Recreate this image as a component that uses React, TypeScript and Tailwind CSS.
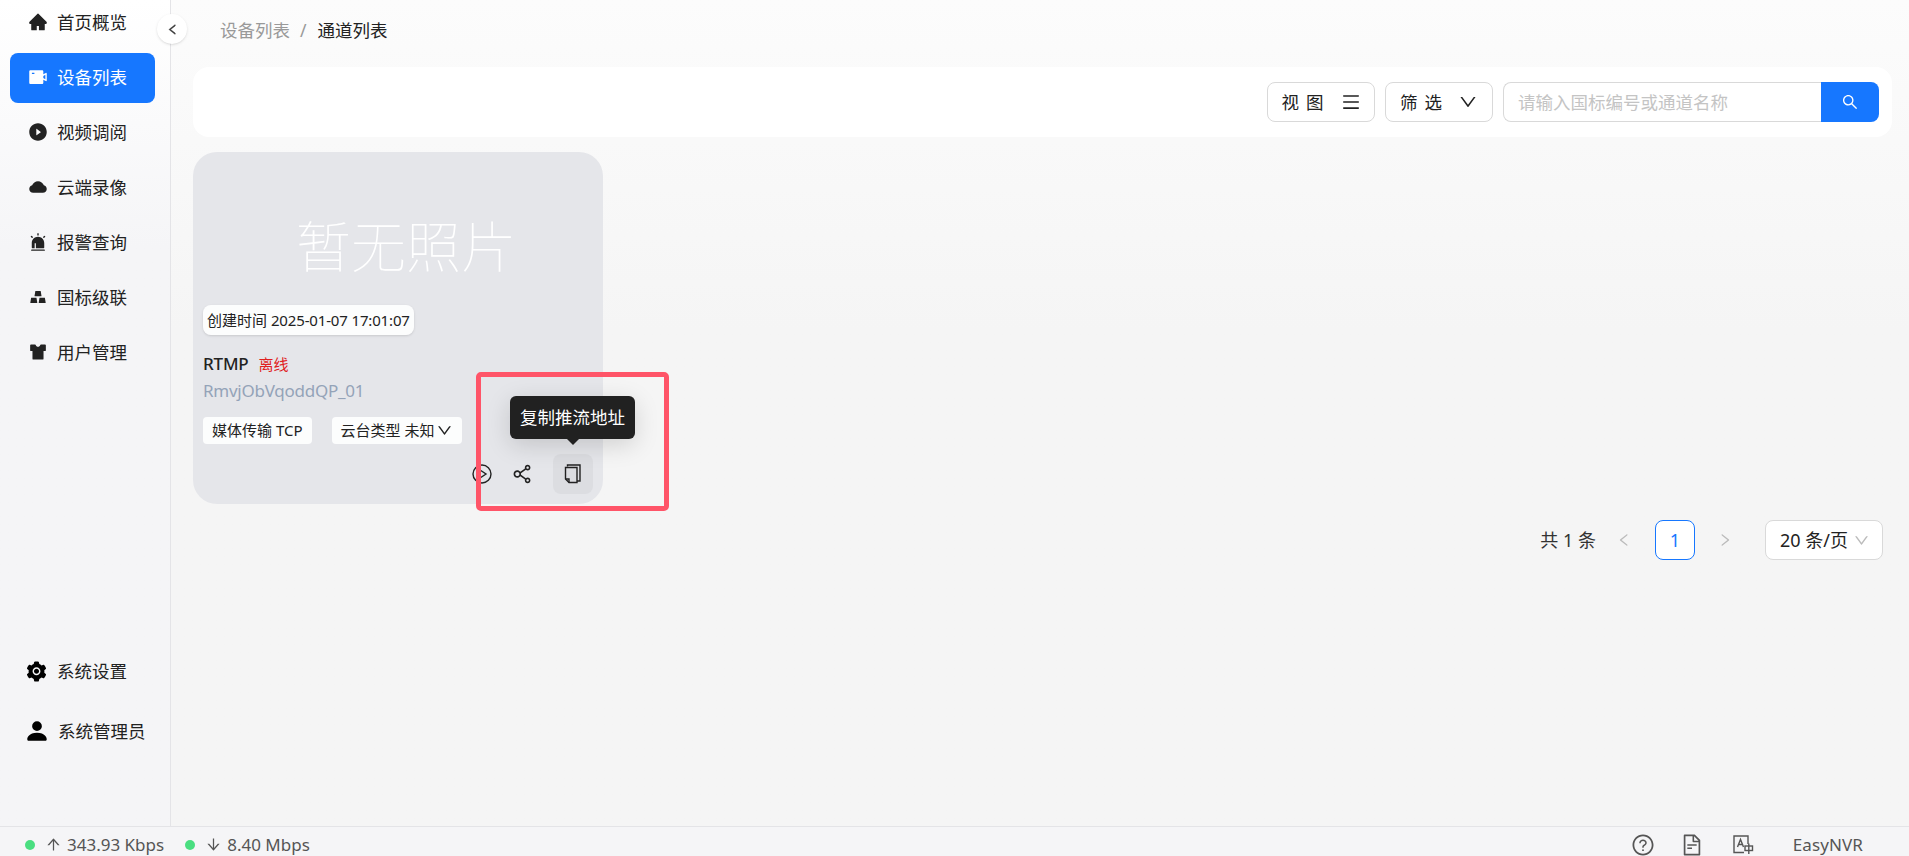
import type { ReactNode } from 'react';
import {
  AiFillAlert,
  AiFillCloud,
  AiFillGold,
  AiFillHome,
  AiFillPlayCircle,
  AiFillSetting,
  AiFillSkin,
  AiFillVideoCamera,
  AiOutlineDown,
  AiOutlineFileText,
  AiOutlineLeft,
  AiOutlineMenu,
  AiOutlineQuestionCircle,
  AiOutlineRight,
  AiOutlineSearch,
  AiOutlineShareAlt,
  AiOutlineArrowUp,
  AiOutlineArrowDown,
} from 'react-icons/ai';
import { BsPersonFill } from 'react-icons/bs';

const FONT = "font-['Noto_Sans','Noto_Sans_CJK_SC',sans-serif]";

const menu: { label: string; icon: ReactNode; active?: boolean }[] = [
  { label: '首页概览', icon: <AiFillHome size={22} /> },
  { label: '设备列表', icon: <AiFillVideoCamera size={22} />, active: true },
  { label: '视频调阅', icon: <AiFillPlayCircle size={22} /> },
  { label: '云端录像', icon: <AiFillCloud size={22} /> },
  { label: '报警查询', icon: <AiFillAlert size={20} /> },
  { label: '国标级联', icon: <AiFillGold size={20} /> },
  { label: '用户管理', icon: <AiFillSkin size={22} /> },
];

function Sidebar() {
  return (
    <aside className="w-[171px] shrink-0 border-r border-[#e4e4e7] flex flex-col justify-between bg-gradient-to-b from-white to-[#f5f5f7] to-[30%]">
      <nav className="flex flex-col gap-[5px] pl-[10px] pr-[15px] -mt-[2px]">
        {menu.map(m => (
          <div
            key={m.label}
            className={`h-[50px] rounded-lg flex items-center text-[17.5px] pl-[18px] pb-[2px] gap-[9px] ${
              m.active ? 'bg-[#1677ff] text-white' : 'text-[#222]'
            }`}
          >
            <span className="w-[20px] flex justify-center">{m.icon}</span>
            <span>{m.label}</span>
          </div>
        ))}
      </nav>
      <div className="flex flex-col gap-[34px] pl-[25px] pb-[82px] text-[17.5px] text-[#222]">
        <div className="flex items-center gap-[9px] h-[26px]">
          <AiFillSetting size={23} className="text-black" />
          <span>系统设置</span>
        </div>
        <div className="flex items-center gap-[8px] h-[26px]">
          <BsPersonFill size={26} className="text-black -ml-[1px]" />
          <span>系统管理员</span>
        </div>
      </div>
    </aside>
  );
}

function CopyIcon() {
  return (
    <svg width="18" height="20" viewBox="0 0 18 20" fill="none" stroke="#222" strokeWidth="1.4">
      <path d="M3.5 2.5 V1 H16 V17 H13" />
      <path d="M1.5 3.5 H13 V18.5 H5 L1.5 15 Z" />
      <path d="M1.5 15 H5 V18.5" />
    </svg>
  );
}

function PlayIcon() {
  return (
    <svg width="20" height="20" viewBox="0 0 20 20" fill="none" stroke="#222" strokeWidth="1.4">
      <circle cx="10" cy="10" r="9" />
      <path d="M8 6 L14 10 L8 14 Z" />
    </svg>
  );
}

function TranslateIcon() {
  return (
    <svg width="21" height="20" viewBox="0 0 21 20" fill="none" stroke="#555" strokeWidth="1.4">
      <path d="M11 17.5 H1 V1 H15 V9" />
      <path d="M4.5 12 L7.5 4.5 L10.5 12 M5.5 9.5 H9.5" />
      <rect x="12" y="11" width="7.5" height="4.5" />
      <path d="M15.8 8.5 V19" />
    </svg>
  );
}

function Toolbar() {
  return (
    <div className="h-[70px] bg-white rounded-2xl mr-[17px] flex items-center justify-end gap-[10px] pr-[13px]">
      <button className="w-[108px] h-[40px] border border-[#d9d9d9] rounded-lg flex items-center justify-center gap-[10px] text-[17.5px] text-[#222]">
        <span className="tracking-[7px]">视图</span>
        <AiOutlineMenu size={20} />
      </button>
      <button className="w-[108px] h-[40px] border border-[#d9d9d9] rounded-lg flex items-center justify-center gap-[9px] text-[17.5px] text-[#222]">
        <span className="tracking-[7px]">筛选</span>
        <AiOutlineDown size={20} />
      </button>
      <div className="w-[376px] h-[40px] flex">
        <input
          placeholder="请输入国标编号或通道名称"
          className="flex-1 min-w-0 h-full border border-r-0 border-[#d9d9d9] rounded-l-lg px-[14px] text-[17.5px] outline-none placeholder:text-[#c4c4c4]"
        />
        <button className="w-[58px] h-full bg-[#1677ff] rounded-r-lg flex items-center justify-center text-white">
          <AiOutlineSearch size={18} />
        </button>
      </div>
    </div>
  );
}

function ChannelCard() {
  return (
    <div className="w-[410px] h-[352px] rounded-3xl bg-[#e5e6ea] px-[10px] relative flex flex-col">
      <div className="h-[153px] pt-[63px] pl-[93px]">
        <span className="text-[55px] leading-[62px] font-thin text-white">暂无照片</span>
      </div>
      <div className="self-start h-[30px] px-[4px] flex items-center bg-white/90 rounded-lg shadow-sm text-[15px] text-[#222]">
        创建时间&nbsp;<span className="tracking-[-0.15px]">2025-01-07 17:01:07</span>
      </div>
      <div className="mt-[17px] flex items-center gap-[10px] h-[24px]">
        <span className="text-[17px] font-medium text-[#222] tracking-[-0.2px]">RTMP</span>
        <span className="text-[15px] text-[#e02020]">离线</span>
      </div>
      <div className="mt-[2px] text-[17px] leading-[26px] text-[#94a3b8] tracking-[-0.25px]">RmvjObVqoddQP_01</div>
      <div className="mt-[13px] flex gap-[20px] text-[15px] text-[#222]">
        <span className="h-[27px] px-[9px] flex items-center bg-white/90 rounded">媒体传输 TCP</span>
        <span className="h-[27px] px-[9px] flex items-center gap-[2px] bg-white/90 rounded">
          云台类型 未知
          <AiOutlineDown size={17} />
        </span>
      </div>
      <div className="mt-[10px] flex items-center justify-end gap-[18px]">
        <PlayIcon />
        <AiOutlineShareAlt size={24} className="text-[#222]" />
        <span className="w-[40px] h-[40px] ml-[1px] bg-[#dcdde1] rounded-lg flex items-center justify-center">
          <CopyIcon />
        </span>
      </div>

      {/* tooltip */}
      <div className="absolute left-[317px] top-[244px] h-[43px] w-[125px] bg-[#212121] rounded-md text-white text-[17.5px] flex items-center justify-center shadow-[0_6px_24px_rgba(0,0,0,0.15)]">
        复制推流地址
        <span className="absolute left-1/2 -bottom-[6px] -ml-[6px] w-0 h-0 border-x-[6px] border-x-transparent border-t-[6px] border-t-[#212121]" />
      </div>
      {/* red annotation box */}
      <div className="absolute left-[283px] top-[220px] w-[193px] h-[139px] border-[5px] border-[#ff5468] rounded-[5px]" />
    </div>
  );
}

function Pagination() {
  return (
    <div className="flex items-center justify-end mr-[26px] mt-[16px] h-[40px] text-[18px] text-[#333]">
      <span>共 1 条</span>
      <AiOutlineLeft size={16} className="ml-[20px] text-[#bbb]" />
      <span className="ml-[23px] w-[40px] h-[40px] border border-[#1677ff] rounded-lg flex items-center justify-center text-[#1677ff] bg-white">1</span>
      <AiOutlineRight size={16} className="ml-[22px] text-[#bbb]" />
      <span className="ml-[32px] w-[118px] h-[40px] border border-[#d9d9d9] rounded-lg bg-white flex items-center justify-between pl-[14px] pr-[12px] text-[#222]">
        20 条/页
        <AiOutlineDown size={17} className="text-[#bbb]" />
      </span>
    </div>
  );
}

export default function App() {
  return (
    <div className={`h-[856px] overflow-hidden flex flex-col bg-[#f5f5f7] ${FONT}`}>
      <div className="flex flex-1 min-h-0 relative">
        <Sidebar />
        <button className="absolute left-[157px] top-[14px] w-[30px] h-[30px] rounded-full bg-white shadow-sm flex items-center justify-center text-[#333]">
          <AiOutlineLeft size={13} strokeWidth={40} />
        </button>
        <main className="flex-1 min-w-0 pl-[22px] bg-gradient-to-b from-[#fcfcfc] to-[#f5f5f5] to-[40%]">
          <div className="h-[67px] pl-[27px] pt-[18px] text-[17.5px] leading-[24px]">
            <span className="text-[#999]">设备列表</span>
            <span className="text-[#999] mx-[10px]">/</span>
            <span className="text-[#222] ml-[1px]">通道列表</span>
          </div>
          <Toolbar />
          <div className="mt-[15px]">
            <ChannelCard />
          </div>
          <Pagination />
        </main>
      </div>
      <footer className="h-[30px] shrink-0 border-t border-[#e4e4e7] flex items-center justify-between text-[17px] text-[#555] pt-[6px] pl-[25px] pr-[46px]">
        <div className="flex items-center">
          <span className="w-[10px] h-[10px] rounded-full bg-[#4ade80]" />
          <AiOutlineArrowUp size={17} className="ml-[10px]" />
          <span className="ml-[5px]">343.93 Kbps</span>
          <span className="ml-[21px] w-[10px] h-[10px] rounded-full bg-[#4ade80]" />
          <AiOutlineArrowDown size={17} className="ml-[10px]" />
          <span className="ml-[5px]">8.40 Mbps</span>
        </div>
        <div className="flex items-center">
          <AiOutlineQuestionCircle size={24} />
          <AiOutlineFileText size={24} className="ml-[25px]" />
          <span className="ml-[29px] flex"><TranslateIcon /></span>
          <span className="ml-[39px] tracking-[0.1px]">EasyNVR</span>
        </div>
      </footer>
    </div>
  );
}
